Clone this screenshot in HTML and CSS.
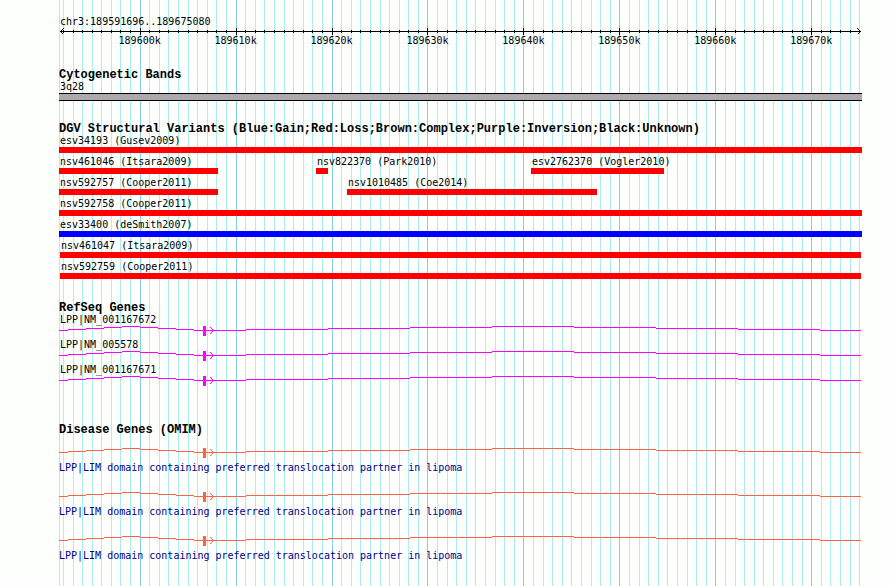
FILE: index.html
```
<!DOCTYPE html>
<html lang="en">
<head>
    <meta charset="UTF-8">
    <meta name="viewport" content="width=device-width, initial-scale=1.0">
    <title>chr3:189591696..189675080</title>
    <link rel="stylesheet" href="styles.css">
</head>
<body>
    <svg class="defs" aria-hidden="true">
        <symbol id="gene" viewBox="0 0 803 11" preserveAspectRatio="none">
            <path d="M0 4.5H9M9 3.5H27M27 2.5H45M45 1.5H63M63 .5H81M81 1.5H99M99 2.5H117M117 3.5H135M135 4.5H187M187 3.5H269M269 2.5H351M351 1.5H433M433 .5H515M515 1.5H597M597 2.5H679M679 3.5H761M761 4.5H802" fill="none" stroke="currentColor"/>
            <path d="M144 0h3v10h-3z" fill="currentColor"/>
            <path d="M151 1h1v1h-1zM152 2h1v1h-1zM153 3h1v1h-1zM154 4h1v1h-1zM153 5h1v1h-1zM152 6h1v1h-1zM151 7h1v1h-1z" fill="currentColor"/>
        </symbol>
    </svg>

    <main class="plot">
        <div class="grid" id="grid"></div>

        <header class="ruler">
            <div class="label">chr3:189591696..189675080</div>
            <div class="axis" id="axis">
                <svg class="arrow" viewBox="0 0 4 7"><path d="M3.5 .5L.5 3.5L3.5 6.5"/></svg>
                <svg class="arrow right" viewBox="0 0 4 7"><path d="M.5 .5L3.5 3.5L.5 6.5"/></svg>
            </div>
        </header>

        <section class="track">
            <h2>Cytogenetic Bands</h2>
            <div class="label">3q28</div>
            <div class="band"></div>
        </section>

        <section class="track">
            <h2>DGV Structural Variants (Blue:Gain;Red:Loss;Brown:Complex;Purple:Inversion;Black:Unknown)</h2>
            <div class="row">
                <div class="variant loss" style="width: 100%">esv34193 (Gusev2009)</div>
            </div>
            <div class="row">
                <div class="variant loss" style="width: 19.8%">nsv461046 (Itsara2009)</div>
                <div class="variant loss" style="margin-left: 12.2%; width: 1.5%">nsv822370 (Park2010)</div>
                <div class="variant loss" style="margin-left: 25.28%; width: 16.56%">esv2762370 (Vogler2010)</div>
            </div>
            <div class="row">
                <div class="variant loss" style="width: 19.8%">nsv592757 (Cooper2011)</div>
                <div class="variant loss" style="margin-left: 16.06%; width: 31.13%">nsv1010485 (Coe2014)</div>
            </div>
            <div class="row">
                <div class="variant loss" style="width: 100%">nsv592758 (Cooper2011)</div>
            </div>
            <div class="row">
                <div class="variant gain" style="width: 100%">esv33400 (deSmith2007)</div>
            </div>
            <div class="row">
                <div class="variant loss" style="margin-left: 0.12%; width: 99.75%">nsv461047 (Itsara2009)</div>
            </div>
            <div class="row">
                <div class="variant loss" style="margin-left: 0.12%; width: 99.75%">nsv592759 (Cooper2011)</div>
            </div>
        </section>

        <section class="track refseq">
            <h2>RefSeq Genes</h2>
            <div class="label">LPP|NM_001167672</div>
            <svg class="gene"><use href="#gene"/></svg>
            <div class="label">LPP|NM_005578</div>
            <svg class="gene"><use href="#gene"/></svg>
            <div class="label">LPP|NM_001167671</div>
            <svg class="gene"><use href="#gene"/></svg>
        </section>

        <section class="track omim">
            <h2>Disease Genes (OMIM)</h2>
            <svg class="gene"><use href="#gene"/></svg>
            <div class="note">LPP|LIM domain containing preferred translocation partner in lipoma</div>
            <svg class="gene"><use href="#gene"/></svg>
            <div class="note">LPP|LIM domain containing preferred translocation partner in lipoma</div>
            <svg class="gene"><use href="#gene"/></svg>
            <div class="note">LPP|LIM domain containing preferred translocation partner in lipoma</div>
        </section>
    </main>

    <script>
        // visible range in base pairs
        const start = 189591592;
        const span = 83697;
        const grid = document.getElementById('grid');
        const axis = document.getElementById('axis');

        function add(parent, cls, left, text) {
            const el = document.createElement('span');
            el.className = cls;
            el.style.left = left + '%';
            if (text) el.textContent = text;
            parent.appendChild(el);
        }

        add(grid, 'line', 0);
        for (let k = 189592; k <= 189675; k++) {
            const left = (k * 1000 - start) / span * 100;
            const major = k % 10 == 0;
            add(grid, major ? 'line major' : 'line', left);
            add(axis, major ? 'tick major' : 'tick', left);
            if (major) add(axis, 'tick-label', left, k + 'k');
        }
    </script>
</body>
</html>
```
FILE: styles.css
```
body {
    margin: 0;
    background: #fdfffc;
    color: black;
    font: 10px/14px "DejaVu Sans Mono", "Liberation Mono", monospace;
}
.defs {
    position: absolute;
    width: 0;
    height: 0;
}
.plot {
    position: relative;
    box-sizing: border-box;
    min-height: 100vh;
    margin: 0 28px 0 59px;
    padding-top: 15px;
    white-space: nowrap;
}

/* grid lines behind the tracks */
.grid {
    position: absolute;
    inset: 0;
}
.line {
    position: absolute;
    top: 0;
    bottom: 0;
    width: 1px;
    background: #afeeee;
}
.line.major {
    background: #87ceeb;
}

.ruler, .track {
    position: relative;
}
.label {
    height: 12px;
    padding-left: 1px;
}

.axis {
    position: relative;
    height: 20px;
    background: linear-gradient(black, black) 1px 4px / calc(100% - 2px) 1px no-repeat;
}
.arrow {
    position: absolute;
    left: 1px;
    top: 1px;
    width: 4px;
    height: 7px;
    fill: none;
    stroke: black;
    shape-rendering: crispEdges;
}
.arrow.right {
    left: auto;
    right: 1px;
}
.tick {
    position: absolute;
    top: 3px;
    width: 1px;
    height: 3px;
    background: black;
}
.tick.major {
    top: 1px;
    height: 7px;
}
.tick-label {
    position: absolute;
    top: 7px;
    transform: translateX(-50%);
}

.track {
    margin-top: 21px;
}
h2 {
    height: 12px;
    margin: 0;
    font: bold 12px/14px "Liberation Mono", monospace;
}
.band {
    box-sizing: border-box;
    height: 8px;
    margin-top: 1px;
    border: solid black;
    border-width: 1px 0;
    background: #aca8ac;
}

.row {
    display: flex;
    height: 21px;
}
.variant {
    flex: none;
    box-sizing: border-box;
    height: 19px;
    text-indent: 1px;
    border-bottom: 6px solid;
}
.loss {
    border-color: red;
}
.gain {
    border-color: blue;
}

.gene {
    display: block;
    width: 100%;
    height: 11px;
    margin: 1px 0;
    shape-rendering: crispEdges;
}
.refseq {
    margin-top: 20px;
}
.refseq .gene {
    color: magenta;
}
.omim {
    margin-top: 36px;
}
.omim .gene {
    margin: 13px 0 2px;
    color: tomato;
}
.note {
    height: 12px;
    margin-bottom: 19px;
    color: #00008b;
}
```
